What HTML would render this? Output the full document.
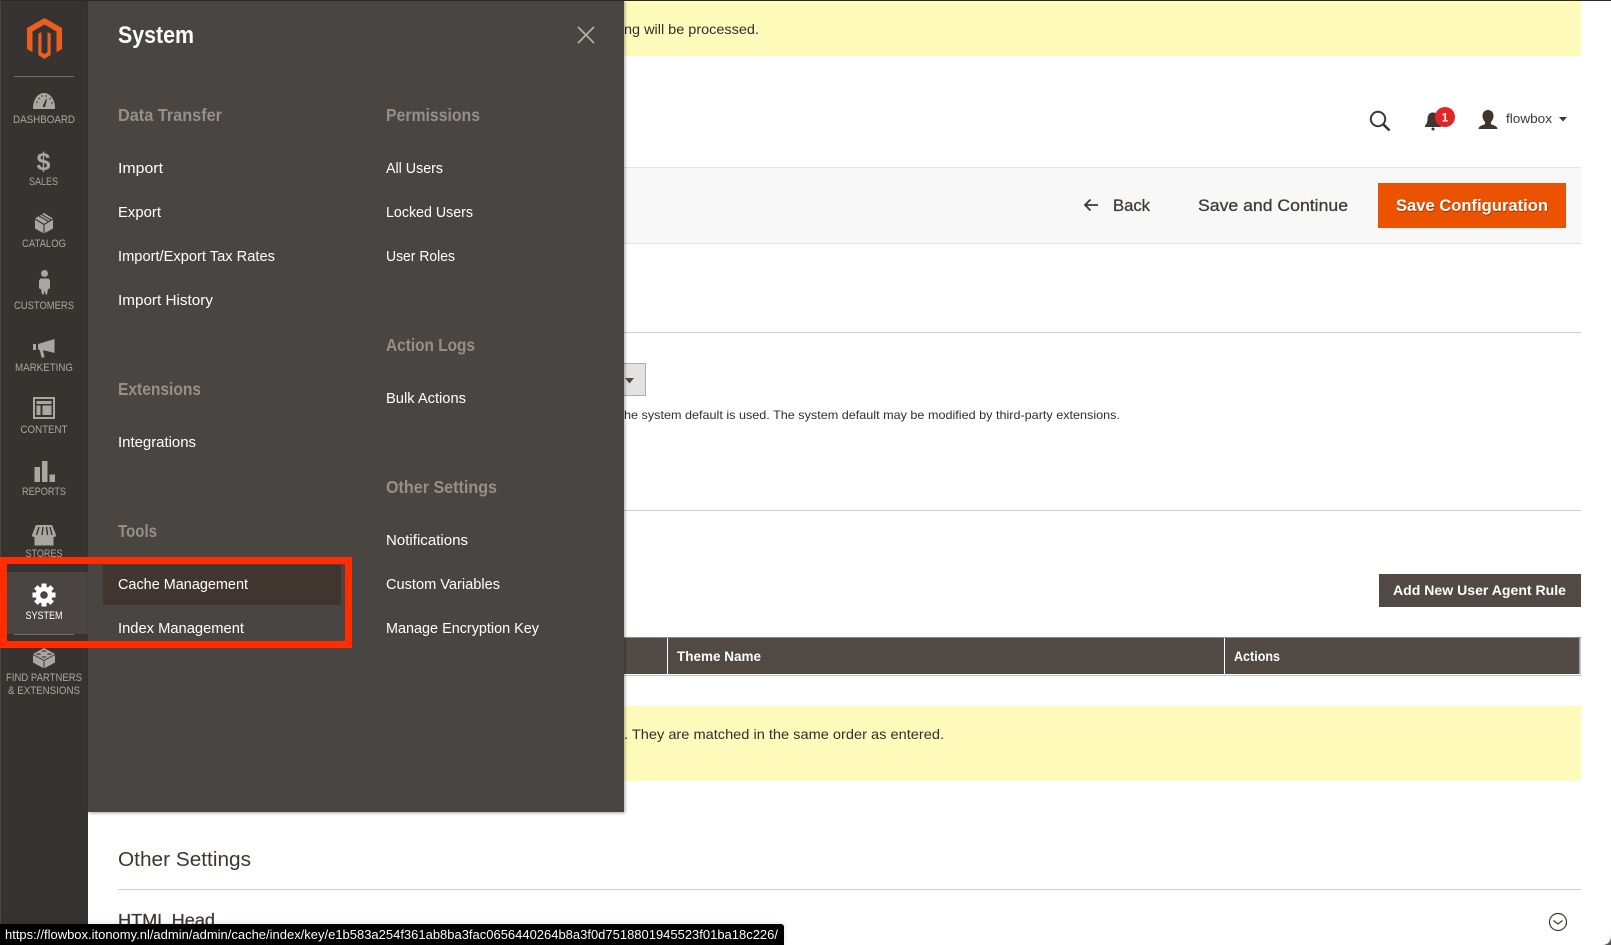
<!DOCTYPE html>
<html lang="en"><head><meta charset="utf-8"><title>System</title>
<style>
html,body{margin:0;padding:0;background:#fff;overflow:hidden;width:1611px;height:945px}
svg{display:block;position:absolute;left:0;top:0}
text{font-family:"Liberation Sans",Arial,sans-serif;white-space:pre}
.n{fill:#aaa6a0;font-size:11px}
.i{fill:#fff;font-size:14.5px}
.h{fill:#968f89;font-size:17.5px;font-weight:bold}
.d{fill:#303030;font-size:14px}
.m{stroke:currentColor;stroke-width:.25}
</style></head><body>
<svg width="1611" height="945" viewBox="0 0 1611 945" xmlns="http://www.w3.org/2000/svg">
<defs>
<filter id="ps" x="-5%" y="-5%" width="110%" height="110%"><feDropShadow dx="1" dy="1" stdDeviation="1.5" flood-color="#000" flood-opacity=".35"/></filter>
<filter id="ts" x="-5%" y="-60%" width="110%" height="200%"><feDropShadow dx="0" dy="-1" stdDeviation="3" flood-color="#000" flood-opacity=".12"/></filter>
</defs>
<rect width="1611" height="945" fill="#fff"/>

<!-- main content -->
<rect x="600" y="1" width="981" height="55" fill="#fffbbb"/>
<text class="d" x="624" y="34" textLength="135" lengthAdjust="spacingAndGlyphs">ng will be processed.</text>

<g fill="none" stroke="#41362f" stroke-width="2"><circle cx="1378" cy="119" r="7.2"/><path d="M1383.500 124.500L1389.500 130.500" stroke-width="2.600"/></g>
<path d="M1433 112.500c-4 0-5.500 3-5.500 6.500 0 3.500-1 5-2.500 6.500v1.500h16v-1.500c-1.500-1.500-2.500-3-2.500-6.500 0-3.500-1.500-6.500-5.500-6.500z" fill="#41362f"/><circle cx="1433" cy="129" r="1.500" fill="#41362f"/>
<circle cx="1445" cy="117" r="10" fill="#e22626"/>
<text x="1445" y="121.500" text-anchor="middle" fill="#fff" font-size="11.500" font-weight="bold">1</text>
<path d="M1488 110c-3.600 0-5.500 2.600-5.500 6 0 2.600 1 4.500 2.500 6v2c-1 1.200-6.500 1.500-6.500 5h19c0-3.500-5.500-3.800-6.500-5v-2c1.500-1.500 2.500-3.400 2.500-6 0-3.400-1.900-6-5.500-6z" fill="#41362f"/>
<text x="1506" y="123" fill="#41362f" font-size="13" textLength="46" lengthAdjust="spacingAndGlyphs">flowbox</text>
<path d="M1559 117h8l-4 4.500z" fill="#41362f"/>

<rect x="600" y="167" width="981" height="77" fill="#f8f8f8"/>
<rect x="600" y="167" width="981" height="1" fill="#e3e3e3"/>
<rect x="600" y="243" width="981" height="1" fill="#e3e3e3"/>
<path d="M1098 205h-13M1090.500 199.500l-5.500 5.500 5.500 5.500" fill="none" stroke="#41362f" stroke-width="1.800"/>
<text x="1113" y="211" fill="#41362f" class="m" style="color:#41362f" font-size="16.500" textLength="37" lengthAdjust="spacingAndGlyphs">Back</text>
<text x="1198" y="211" fill="#41362f" class="m" style="color:#41362f" font-size="16.500" textLength="150" lengthAdjust="spacingAndGlyphs">Save and Continue</text>
<rect x="1378" y="183" width="188" height="45" fill="#eb5202"/>
<text x="1396.500" y="212" fill="#7a2c00" fill-opacity=".8" font-size="16.500" font-weight="bold" textLength="152" lengthAdjust="spacingAndGlyphs">Save Configuration</text>
<text x="1396" y="211" fill="#fff" font-size="16.500" font-weight="bold" textLength="152" lengthAdjust="spacingAndGlyphs">Save Configuration</text>

<rect x="600" y="332" width="981" height="1" fill="#cfcfcf"/>
<rect x="600" y="363.500" width="45.500" height="32" fill="#e3e3e3" stroke="#adadad"/>
<path d="M625 378h9l-4.500 5.500z" fill="#514943"/>
<text x="624" y="419" fill="#303030" font-size="12" textLength="496" lengthAdjust="spacingAndGlyphs">he system default is used. The system default may be modified by third-party extensions.</text>
<rect x="600" y="510" width="981" height="1" fill="#cfcfcf"/>

<rect x="1379" y="574" width="202" height="33" fill="#514943"/>
<text x="1393" y="595" fill="#fff" font-size="14" font-weight="bold" textLength="173" lengthAdjust="spacingAndGlyphs">Add New User Agent Rule</text>

<rect x="600" y="637" width="981" height="38.500" fill="#8a8a8a"/>
<rect x="600" y="638" width="979.500" height="36" fill="#514943"/>
<rect x="1579.500" y="638" width="1" height="36" fill="#fff"/>
<rect x="600" y="674" width="980.500" height="1" fill="#fff"/>
<rect x="667" y="638" width="1" height="36" fill="#fff"/>
<rect x="1224" y="638" width="1" height="36" fill="#fff"/>
<text x="677" y="661" fill="#fff" font-size="13.500" font-weight="bold" textLength="84" lengthAdjust="spacingAndGlyphs">Theme Name</text>
<text x="1234" y="661" fill="#fff" font-size="13.500" font-weight="bold" textLength="46" lengthAdjust="spacingAndGlyphs">Actions</text>

<rect x="600" y="706" width="981" height="75" fill="#fffbbb"/>
<text class="d" x="624" y="739" textLength="320" lengthAdjust="spacingAndGlyphs">. They are matched in the same order as entered.</text>

<text x="118" y="866" fill="#41362f" font-size="20.500" textLength="133" lengthAdjust="spacingAndGlyphs">Other Settings</text>
<rect x="118" y="889" width="1463" height="1" fill="#cfcfcf"/>
<text x="118" y="926" fill="#41362f" font-size="17.500" class="m" style="color:#41362f" textLength="97" lengthAdjust="spacingAndGlyphs">HTML Head</text>
<g fill="none" stroke="#41362f" stroke-width="1.200"><circle cx="1558" cy="922" r="8.500"/><path d="M1553.500 920.500l4.500 3.500 4.500-3.500"/></g>
<path d="M1611 935Q1611 945 1602 945L1611 945Z" fill="#555"/>

<!-- sidebar -->
<rect x="0" y="0" width="88" height="945" fill="#373330"/>
<rect x="0" y="0" width="1" height="945" fill="#4a4542"/>
<rect x="7" y="572" width="81" height="62" fill="#4a4542"/>
<rect x="14" y="76" width="60" height="1" fill="#736e69"/>
<rect x="14" y="634" width="60" height="1" fill="#736e69"/>

<path d="M44.500 18L62 28V49L56.500 52.200V31.500L44.500 24.500L32.500 31.500V52.200L27 49V28Z" fill="#ec5e20"/>
<path d="M38.300 33.800L41.500 32V52.200L44.500 54L47.500 52.200V32L50.700 33.800V55L44.500 59L38.300 55Z" fill="#ec5e20"/>

<g fill="#aaa6a0">
<!-- dashboard -->
<path d="M33 109c0-2 0-4 .5-5.500C35 97 39 93 44 93s9 4 10.500 10.500c.5 1.500.5 3.500.5 5.500z"/>
<path d="M42.500 106.500l3.500-7.500 1 .4-2 8z" fill="#373330"/>
<g fill="#373330"><circle cx="37" cy="102" r=".8"/><circle cx="39" cy="98.500" r=".8"/><circle cx="42" cy="96" r=".8"/><circle cx="46" cy="96" r=".8"/><circle cx="50" cy="98.500" r=".8"/><circle cx="52" cy="103" r=".8"/></g>
<!-- sales -->
<text x="43.500" y="170" text-anchor="middle" font-size="25" font-weight="bold">$</text>
<!-- catalog -->
<path d="M35 218.500L44 213L53 218.500V228.500L44 233.500L35 228.500Z"/>
<path d="M35 219L44 224.500L53 219M44 224.500V233.500M39 216L48.500 221.500M41.500 214.500L51 220" fill="none" stroke="#373330" stroke-width="1.100"/>
<!-- customers -->
<circle cx="44.500" cy="273.500" r="3.500"/>
<path d="M40.500 278.500h8l1.500 2v8l-2 .5-1 5.500h-1.500l-1-4-1 4h-1.500l-1-5.500-2-.5v-8z"/>
<!-- marketing -->
<rect x="33" y="344" width="3" height="6"/>
<path d="M38 344L54.500 339V353L47 351 43 350.300 44.500 357 41.800 358 39.500 349.600 38 349.500Z"/>
<!-- content -->
<path fill-rule="evenodd" d="M33 397h22v22H33zM35 399v18h18v-18z"/>
<rect x="36.500" y="401" width="15" height="3"/>
<rect x="36.500" y="405.500" width="4" height="9.500"/>
<rect x="42.500" y="405.500" width="9" height="9.500"/>
<!-- reports -->
<rect x="34.500" y="467" width="5.500" height="15"/>
<rect x="42" y="461" width="5.500" height="21"/>
<rect x="49.500" y="474.500" width="5.500" height="7.500"/>
<!-- stores -->
<path d="M36 525H52L56 535c0 1.500-1 2-2 2H34c-1 0-2-.5-2-2z"/>
<rect x="34.500" y="537" width="19" height="8.500"/>
<path d="M39 527l-2.500 8M43 527l-1 8M46.500 527l1 8M50 527l2 8" stroke="#373330" stroke-width="1.400" fill="none"/>
<!-- find partners -->
<path d="M33 654L44 648L55 654V662.500L44 668.500L33 662.500Z"/>
<path d="M33 654.500L44 660.500L55 654.500M44 660.500V668.500" fill="none" stroke="#373330" stroke-width=".9"/>
<g fill="#373330" opacity=".6"><ellipse cx="44" cy="651" rx="2.500" ry="1"/><ellipse cx="38.500" cy="654" rx="2.500" ry="1"/><ellipse cx="49.500" cy="654" rx="2.500" ry="1"/><ellipse cx="44" cy="657" rx="2.500" ry="1"/></g>
</g>
<!-- system gear -->
<g transform="translate(44 595)" fill="#fff">
<circle r="8.500"/>
<g><rect x="-2.500" y="-11.500" width="5" height="5"/><rect x="-2.500" y="6.500" width="5" height="5"/><rect x="-11.500" y="-2.500" width="5" height="5"/><rect x="6.500" y="-2.500" width="5" height="5"/></g>
<g transform="rotate(45)"><rect x="-2.500" y="-11.500" width="5" height="5"/><rect x="-2.500" y="6.500" width="5" height="5"/><rect x="-11.500" y="-2.500" width="5" height="5"/><rect x="6.500" y="-2.500" width="5" height="5"/></g>
<circle r="3.800" fill="#4a4542"/>
</g>

<text class="n" x="13" y="123" textLength="62" lengthAdjust="spacingAndGlyphs">DASHBOARD</text>
<text class="n" x="29" y="185" textLength="29" lengthAdjust="spacingAndGlyphs">SALES</text>
<text class="n" x="22" y="247" textLength="44" lengthAdjust="spacingAndGlyphs">CATALOG</text>
<text class="n" x="14" y="309" textLength="60" lengthAdjust="spacingAndGlyphs">CUSTOMERS</text>
<text class="n" x="15" y="371" textLength="58" lengthAdjust="spacingAndGlyphs">MARKETING</text>
<text class="n" x="20.500" y="433" textLength="47" lengthAdjust="spacingAndGlyphs">CONTENT</text>
<text class="n" x="22" y="495" textLength="44" lengthAdjust="spacingAndGlyphs">REPORTS</text>
<text class="n" x="25.500" y="557" textLength="37" lengthAdjust="spacingAndGlyphs">STORES</text>
<text class="n" x="25.500" y="619" textLength="37" lengthAdjust="spacingAndGlyphs" style="fill:#fff">SYSTEM</text>
<text class="n" x="6" y="681" textLength="76" lengthAdjust="spacingAndGlyphs">FIND PARTNERS</text>
<text class="n" x="8" y="694" textLength="72" lengthAdjust="spacingAndGlyphs">&amp; EXTENSIONS</text>

<!-- panel -->
<rect x="88" y="0" width="536" height="812" fill="#4a4542" filter="url(#ps)"/>
<rect x="103" y="565" width="238" height="40" fill="#41362f"/>
<text x="118" y="43" fill="#fff" font-size="24" font-weight="bold" textLength="76" lengthAdjust="spacingAndGlyphs">System</text>
<path d="M578 27L594 43M594 27L578 43" stroke="#b5b1ad" stroke-width="1.600" fill="none"/>

<text class="h" x="118" y="121" textLength="104" lengthAdjust="spacingAndGlyphs">Data Transfer</text>
<text class="i" x="118" y="173" textLength="45" lengthAdjust="spacingAndGlyphs">Import</text>
<text class="i" x="118" y="217" textLength="43" lengthAdjust="spacingAndGlyphs">Export</text>
<text class="i" x="118" y="261" textLength="157" lengthAdjust="spacingAndGlyphs">Import/Export Tax Rates</text>
<text class="i" x="118" y="305" textLength="95" lengthAdjust="spacingAndGlyphs">Import History</text>
<text class="h" x="118" y="395" textLength="83" lengthAdjust="spacingAndGlyphs">Extensions</text>
<text class="i" x="118" y="447" textLength="78" lengthAdjust="spacingAndGlyphs">Integrations</text>
<text class="h" x="118" y="537" textLength="39" lengthAdjust="spacingAndGlyphs">Tools</text>
<text class="i" x="118" y="589" textLength="130" lengthAdjust="spacingAndGlyphs">Cache Management</text>
<text class="i" x="118" y="633" textLength="126" lengthAdjust="spacingAndGlyphs">Index Management</text>

<text class="h" x="386" y="121" textLength="94" lengthAdjust="spacingAndGlyphs">Permissions</text>
<text class="i" x="386" y="173" textLength="57" lengthAdjust="spacingAndGlyphs">All Users</text>
<text class="i" x="386" y="217" textLength="87" lengthAdjust="spacingAndGlyphs">Locked Users</text>
<text class="i" x="386" y="261" textLength="69" lengthAdjust="spacingAndGlyphs">User Roles</text>
<text class="h" x="386" y="351" textLength="89" lengthAdjust="spacingAndGlyphs">Action Logs</text>
<text class="i" x="386" y="403" textLength="80" lengthAdjust="spacingAndGlyphs">Bulk Actions</text>
<text class="h" x="386" y="493" textLength="111" lengthAdjust="spacingAndGlyphs">Other Settings</text>
<text class="i" x="386" y="545" textLength="82" lengthAdjust="spacingAndGlyphs">Notifications</text>
<text class="i" x="386" y="589" textLength="114" lengthAdjust="spacingAndGlyphs">Custom Variables</text>
<text class="i" x="386" y="633" textLength="153" lengthAdjust="spacingAndGlyphs">Manage Encryption Key</text>

<!-- red highlight -->
<rect x="3.500" y="560.500" width="345" height="84" fill="none" stroke="#ff2d00" stroke-width="7"/>

<!-- top edge -->
<rect x="0" y="0" width="1611" height="1" fill="#2a2a2a"/>

<!-- status tooltip -->
<path d="M0 924H781a3 3 0 0 1 3 3V945H0Z" fill="#000" filter="url(#ts)"/>
<text x="5" y="939" fill="#fff" font-size="12.500" textLength="773" lengthAdjust="spacingAndGlyphs">https://flowbox.itonomy.nl/admin/admin/cache/index/key/e1b583a254f361ab8ba3fac0656440264b8a3f0d7518801945523f01ba18c226/</text>
</svg>
</body></html>
